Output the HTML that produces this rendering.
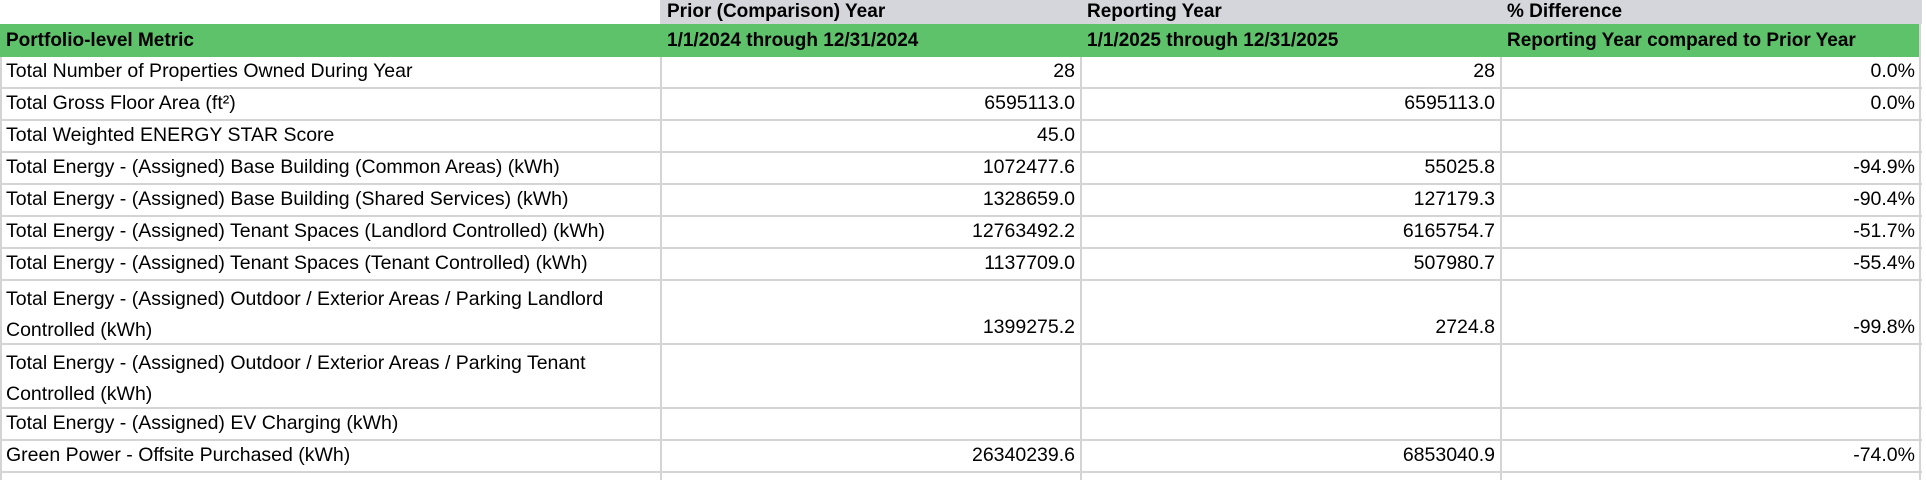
<!DOCTYPE html>
<html><head><meta charset="utf-8"><style>
body{margin:0;width:1926px;height:480px;background:#fff;overflow:hidden;font-family:"Liberation Sans",sans-serif;font-size:19.5px;color:#000;position:relative}
.c{position:absolute;box-sizing:border-box;padding:0 6px 1px 6px;display:flex;align-items:flex-end;white-space:nowrap;line-height:31px}
.r{justify-content:flex-end}
.b{font-weight:bold;font-size:19px}
.h{position:absolute;height:2px;background:#d4d4d4;left:0;width:1922px}
.v{position:absolute;width:2px;background:#d4d4d4}
</style></head><body>
<div style="position:absolute;left:660px;top:0;width:1262px;height:24px;background:#d4d6db"></div>
<div style="position:absolute;left:0;top:24px;width:1921px;height:33px;background:#5ec26b"></div>
<div class="c b" style="left:661px;top:0;height:24px;line-height:22px;padding-bottom:1px">Prior (Comparison) Year</div>
<div class="c b" style="left:1081px;top:0;height:24px;line-height:22px;padding-bottom:1px">Reporting Year</div>
<div class="c b" style="left:1501px;top:0;height:24px;line-height:22px;padding-bottom:1px">% Difference</div>
<div class="c b" style="left:0;top:24px;height:33px">Portfolio-level Metric</div>
<div class="c b" style="left:661px;top:24px;height:33px">1/1/2024 through 12/31/2024</div>
<div class="c b" style="left:1081px;top:24px;height:33px">1/1/2025 through 12/31/2025</div>
<div class="c b" style="left:1501px;top:24px;height:33px">Reporting Year compared to Prior Year</div>

<div class="v" style="left:0;top:57px;height:423px"></div>
<div class="v" style="left:660px;top:57px;height:423px"></div>
<div class="v" style="left:1080px;top:57px;height:423px"></div>
<div class="v" style="left:1500px;top:57px;height:423px"></div>
<div class="v" style="left:1919px;top:24px;height:456px"></div>

<div class="h" style="top:87px"></div>
<div class="h" style="top:119px"></div>
<div class="h" style="top:151px"></div>
<div class="h" style="top:183px"></div>
<div class="h" style="top:215px"></div>
<div class="h" style="top:247px"></div>
<div class="h" style="top:279px"></div>
<div class="h" style="top:343px"></div>
<div class="h" style="top:407px"></div>
<div class="h" style="top:439px"></div>
<div class="h" style="top:471px"></div>

<div class="c" style="left:0;top:57px;height:31px">Total Number of Properties Owned During Year</div>
<div class="c r" style="left:661px;top:57px;width:420px;height:31px">28</div>
<div class="c r" style="left:1081px;top:57px;width:420px;height:31px">28</div>
<div class="c r" style="left:1501px;top:57px;width:420px;height:31px">0.0%</div>

<div class="c" style="left:0;top:89px;height:31px">Total Gross Floor Area (ft²)</div>
<div class="c r" style="left:661px;top:89px;width:420px;height:31px">6595113.0</div>
<div class="c r" style="left:1081px;top:89px;width:420px;height:31px">6595113.0</div>
<div class="c r" style="left:1501px;top:89px;width:420px;height:31px">0.0%</div>

<div class="c" style="left:0;top:121px;height:31px">Total Weighted ENERGY STAR Score</div>
<div class="c r" style="left:661px;top:121px;width:420px;height:31px">45.0</div>

<div class="c" style="left:0;top:153px;height:31px">Total Energy - (Assigned) Base Building (Common Areas) (kWh)</div>
<div class="c r" style="left:661px;top:153px;width:420px;height:31px">1072477.6</div>
<div class="c r" style="left:1081px;top:153px;width:420px;height:31px">55025.8</div>
<div class="c r" style="left:1501px;top:153px;width:420px;height:31px">-94.9%</div>

<div class="c" style="left:0;top:185px;height:31px">Total Energy - (Assigned) Base Building (Shared Services) (kWh)</div>
<div class="c r" style="left:661px;top:185px;width:420px;height:31px">1328659.0</div>
<div class="c r" style="left:1081px;top:185px;width:420px;height:31px">127179.3</div>
<div class="c r" style="left:1501px;top:185px;width:420px;height:31px">-90.4%</div>

<div class="c" style="left:0;top:217px;height:31px">Total Energy - (Assigned) Tenant Spaces (Landlord Controlled) (kWh)</div>
<div class="c r" style="left:661px;top:217px;width:420px;height:31px">12763492.2</div>
<div class="c r" style="left:1081px;top:217px;width:420px;height:31px">6165754.7</div>
<div class="c r" style="left:1501px;top:217px;width:420px;height:31px">-51.7%</div>

<div class="c" style="left:0;top:249px;height:31px">Total Energy - (Assigned) Tenant Spaces (Tenant Controlled) (kWh)</div>
<div class="c r" style="left:661px;top:249px;width:420px;height:31px">1137709.0</div>
<div class="c r" style="left:1081px;top:249px;width:420px;height:31px">507980.7</div>
<div class="c r" style="left:1501px;top:249px;width:420px;height:31px">-55.4%</div>

<div class="c" style="left:0;top:281px;height:63px;display:block;padding-top:3px">Total Energy - (Assigned) Outdoor / Exterior Areas / Parking Landlord<br>Controlled (kWh)</div>
<div class="c r" style="left:661px;top:281px;width:420px;height:63px">1399275.2</div>
<div class="c r" style="left:1081px;top:281px;width:420px;height:63px">2724.8</div>
<div class="c r" style="left:1501px;top:281px;width:420px;height:63px">-99.8%</div>

<div class="c" style="left:0;top:345px;height:63px;display:block;padding-top:3px">Total Energy - (Assigned) Outdoor / Exterior Areas / Parking Tenant<br>Controlled (kWh)</div>

<div class="c" style="left:0;top:409px;height:31px">Total Energy - (Assigned) EV Charging (kWh)</div>

<div class="c" style="left:0;top:441px;height:31px">Green Power - Offsite Purchased (kWh)</div>
<div class="c r" style="left:661px;top:441px;width:420px;height:31px">26340239.6</div>
<div class="c r" style="left:1081px;top:441px;width:420px;height:31px">6853040.9</div>
<div class="c r" style="left:1501px;top:441px;width:420px;height:31px">-74.0%</div>
</body></html>
